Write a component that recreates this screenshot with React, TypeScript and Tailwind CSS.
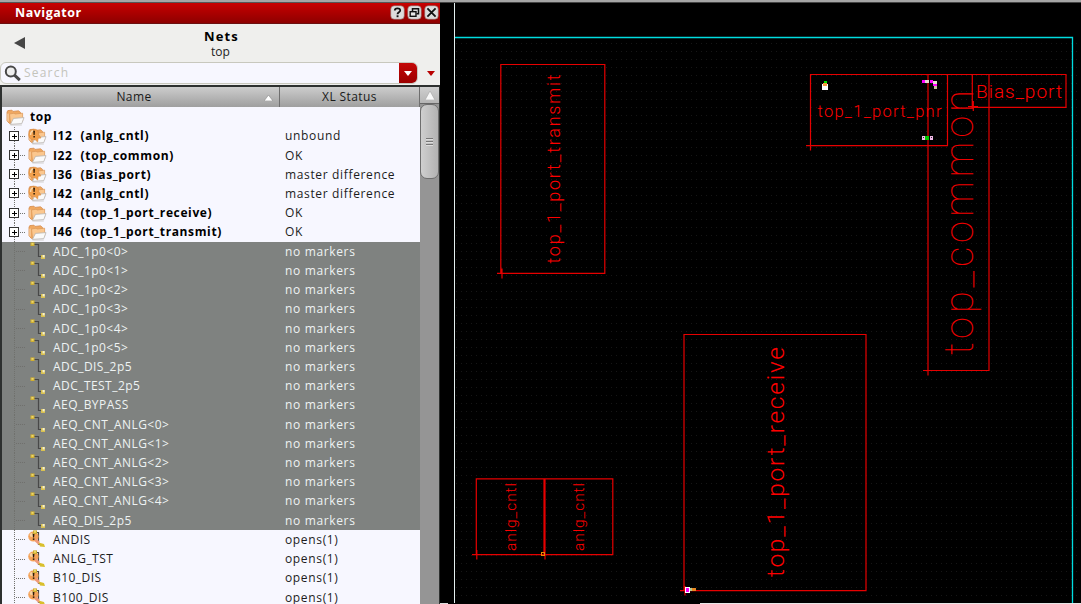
import React from "react";

type Kind = "folder" | "warnFolder" | "net" | "warnNet";
type Row = { kind: Kind; name: string; inst?: string; status: string };

const instances: Row[] = [
  { kind: "warnFolder", name: "I12", inst: "(anlg_cntl)", status: "unbound" },
  { kind: "folder", name: "I22", inst: "(top_common)", status: "OK" },
  { kind: "warnFolder", name: "I36", inst: "(Bias_port)", status: "master difference" },
  { kind: "warnFolder", name: "I42", inst: "(anlg_cntl)", status: "master difference" },
  { kind: "folder", name: "I44", inst: "(top_1_port_receive)", status: "OK" },
  { kind: "folder", name: "I46", inst: "(top_1_port_transmit)", status: "OK" },
];

const selectedNets = [
  "ADC_1p0<0>", "ADC_1p0<1>", "ADC_1p0<2>", "ADC_1p0<3>", "ADC_1p0<4>", "ADC_1p0<5>",
  "ADC_DIS_2p5", "ADC_TEST_2p5", "AEQ_BYPASS", "AEQ_CNT_ANLG<0>", "AEQ_CNT_ANLG<1>",
  "AEQ_CNT_ANLG<2>", "AEQ_CNT_ANLG<3>", "AEQ_CNT_ANLG<4>", "AEQ_DIS_2p5",
];

const openNets = ["ANDIS", "ANLG_TST", "B10_DIS", "B100_DIS"];

function Warning() {
  return (
    <g>
      <path d="M5 1.5 C8.5 .5 11 3 10.6 6.5 L13 10 L10.2 10.2 L9.6 14 L7 11.6 C3 12.5 .8 10 .8 6.6 C.8 4 2.4 2 5 1.5Z" fill="#f2a04c" stroke="#d98a3f" strokeWidth=".6" />
      <path d="M5 2.6 C3.2 3.4 2.4 5 2.6 7" stroke="#fbd9ad" strokeWidth="1.4" fill="none" />
      <path d="M5.2 2.8h1.8l-.4 4.2h-1z" fill="#2a1a08" />
      <rect x="5.4" y="8" width="1.5" height="1.5" fill="#2a1a08" />
    </g>
  );
}

function Folder({ warn }: { warn?: boolean }) {
  return (
    <svg width="19" height="17" viewBox="0 0 19 17" className="shrink-0">
      <path d="M1 3.2 L1.8 1.6 L6 1.2 L7 2.4 L12.5 1.8 L14.5 3.4 L14.5 11 L3.5 14.5 L1 12Z" fill="#f0a860" stroke="#d58c4c" strokeWidth=".8" />
      <path d="M3.5 5 L8 4.2 L9 5 L16.6 4.2 L16.6 12 L4.6 14.8Z" fill="#fbc78e" stroke="#dd9a5c" strokeWidth=".8" />
      <path d="M2 4.6v8" stroke="#fde0bd" strokeWidth="1" />
      <path d="M7.5 9.4 L18 8.6 L15.8 14.6 L4.4 15.4Z" fill="#fafafa" stroke="#b9b4ae" strokeWidth=".8" />
      <path d="M4.4 16h11.4" stroke="#c9c5c2" strokeWidth=".8" />
      {warn && <Warning />}
    </svg>
  );
}

function Net({ warn }: { warn?: boolean }) {
  return (
    <svg width="19" height="19" viewBox="0 0 19 19" className="shrink-0">
      <path d={warn ? "M8 2.5 H10.5 V14.5 H14" : "M5 2.5 H10.5 V14.5 H14"} stroke="#484848" strokeWidth="1.2" fill="none" />
      {warn && (
        <g>
          <ellipse cx="5.4" cy="6.6" rx="5.2" ry="5" fill="#f4a258" />
          <ellipse cx="3.8" cy="5" rx="2.2" ry="2" fill="#fbd3a0" />
          <path d="M7.5 8l4 3.5-.6 3.5-4-3.5z" fill="#ef9a78" />
          <path d="M4.6 3.6h1.9l-.4 3.8h-1.1z" fill="#2a1a08" />
          <rect x="4.8" y="8.4" width="1.6" height="1.5" fill="#2a1a08" />
        </g>
      )}
      <rect x={warn ? 5 : 2.5} y="0.4" width="4" height="3.6" fill="#cfae30" />
      <rect x={warn ? 6 : 3.5} y="1.2" width="2" height="1.4" fill="#f3e27c" />
      {warn ? (
        <path d="M10.5 12.5 L16 14 L17 17 L12 16.4Z" fill="#d9bf2c" />
      ) : (
        <g>
          <rect x="13" y="13" width="4" height="4" fill="#d8c050" />
          <rect x="14.6" y="13" width="2" height="2.4" fill="#f3efd2" />
        </g>
      )}
    </svg>
  );
}

function Branch({ plus }: { plus?: boolean }) {
  return (
    <svg width="26" height="19.22" viewBox="0 0 26 19.22" className="shrink-0">
      <path d="M12.5 0V19.22" stroke="#70706c" strokeDasharray="1 1" />
      <path d="M14 9.5H23" stroke="#70706c" strokeDasharray="1 1" />
      {plus && (
        <g shapeRendering="crispEdges">
          <rect x="7.5" y="4.5" width="9" height="9" fill="#fff" stroke="#333" />
          <path d="M9.5 9.5H15M12.5 7V12" stroke="#000" strokeWidth="1" />
        </g>
      )}
    </svg>
  );
}

function TreeRow({ row, selected }: { row: Row; selected?: boolean }) {
  const isNet = row.kind === "net" || row.kind === "warnNet";
  const warn = row.kind === "warnNet" || row.kind === "warnFolder";
  return (
    <div className={selected ? "flex h-[19.22px] items-center text-[#eef3f3]" : "flex h-[19.22px] items-center text-[#1c1c1c]"}>
      <Branch plus={!isNet} />
      <div className="flex w-[25px] shrink-0 items-center">{isNet ? <Net warn={warn} /> : <Folder warn={warn} />}</div>
      {row.inst ? (
        <div className="flex w-[232px] gap-[8px] whitespace-nowrap text-[12px] font-bold tracking-[0.63px] text-black">
          <span>{row.name}</span>
          <span>{row.inst}</span>
        </div>
      ) : (
        <div className="w-[232px] whitespace-nowrap text-[12px] tracking-[0.45px]">{row.name}</div>
      )}
      <div className="whitespace-nowrap text-[12px] tracking-[0.65px]">{row.status}</div>
    </div>
  );
}

function WinButton({ children }: { children: React.ReactNode }) {
  return (
    <svg width="15" height="15" viewBox="0 0 15 15">
      <rect x=".7" y=".7" width="13.6" height="13.6" rx="3.6" fill="#dcdcdc" stroke="#8b5a55" strokeWidth=".6" />
      {children}
    </svg>
  );
}

function Navigator() {
  return (
    <aside className="flex h-full w-[440px] shrink-0 flex-col bg-[#efefed]">
      <div className="h-[2px] bg-[#a5a5a5]" />
      <div className="flex h-[22px] items-center border-b border-[#6b1010] border-t-[#555] border-t bg-linear-to-b from-[#c80000] to-[#8e0000] pl-[15px] pr-px">
        <h1 className="grow pt-px text-[12.5px] font-bold tracking-[0.5px] text-white">Navigator</h1>
        <div className="flex gap-[2px]">
          <WinButton>
            <path d="M4.8 5.5 C4.8 2.6 10.2 2.6 10.2 5.4 C10.2 7.2 7.5 7.2 7.5 9.2" stroke="#111" strokeWidth="1.8" fill="none" />
            <rect x="6.6" y="10.3" width="1.9" height="1.9" fill="#111" />
          </WinButton>
          <WinButton>
            <path d="M5.5 3.8H11.5V8.8H9.5M5.5 3V6" stroke="#111" strokeWidth="1.5" fill="none" />
            <rect x="3.2" y="6.7" width="5.8" height="4.6" fill="#e8e8e8" stroke="#111" strokeWidth="1.4" />
          </WinButton>
          <WinButton>
            <path d="M3.4 3.4L11.6 11.6M11.6 3.4L3.4 11.6" stroke="#111" strokeWidth="1.8" />
          </WinButton>
        </div>
      </div>
      <div className="grid h-[38px] grid-cols-[40px_1fr_38px] items-center">
        <svg width="11" height="12" viewBox="0 0 11 12" className="ml-[14px]">
          <path d="M0 6L11 0V12Z" fill="#464646" />
        </svg>
        <div className="flex flex-col items-center text-black">
          <span className="pl-[1px] text-[13px] font-bold leading-[17px] tracking-[1.1px]">Nets</span>
          <span className="pr-px text-[12px] leading-[13px] text-[#222]">top</span>
        </div>
      </div>
      <div className="flex h-[23px] items-center">
        <div className="flex h-[22px] w-[418px] items-center overflow-hidden rounded-[6px] border border-[#c8c8be] bg-[#f7f7ff]">
          <svg width="20" height="19" viewBox="0 0 20 19" className="ml-[2px] shrink-0">
            <circle cx="7.8" cy="7.4" r="5" fill="#eee" stroke="#484848" strokeWidth="2" />
            <path d="M11.5 11.2L16.8 16.2" stroke="#484848" strokeWidth="3" />
          </svg>
          <span className="grow pl-[1px] text-[12px] tracking-[1.2px] text-[#c4c4bc]">Search</span>
          <div className="flex h-[21px] w-[18px] items-center justify-center bg-linear-to-b from-[#c40808] to-[#9a0000]">
            <svg width="8" height="5" viewBox="0 0 8 5"><path d="M0 0H8L4 5Z" fill="#fff" /></svg>
          </div>
        </div>
        <svg width="8" height="5" viewBox="0 0 8 5" className="ml-[9px]"><path d="M0 0H8L4 5Z" fill="#b80000" /></svg>
      </div>
      <div className="flex min-h-0 grow flex-col pt-px">
        <div className="flex min-h-0 grow border-l-2 border-r border-t-2 border-[#2d302f]">
          <div className="flex w-[418px] shrink-0 flex-col overflow-hidden bg-[#f7f7ff]">
            <div className="flex h-[20px] shrink-0 bg-linear-to-b from-[#cdcdcd] to-[#9f9f9f] text-[12px] tracking-[0.4px] text-[#1a1a1a]">
              <div className="flex w-[278px] items-center border-r border-[#6f6f6f]">
                <span className="grow pl-[2px] text-center">Name</span>
                <svg width="9" height="6" viewBox="0 0 9 6" className="mr-[6px] mt-[2px]"><path d="M0 6L4.5 0L9 6Z" fill="#fff" stroke="#888" strokeWidth=".6" /></svg>
              </div>
              <div className="grow border-r border-[#6f6f6f] pt-px text-center">XL Status</div>
            </div>
            <div className="flex h-[19.22px] shrink-0 items-center pl-[4px]">
              <Folder />
              <span className="pl-[5px] text-[12px] font-bold tracking-[0.6px] text-black">top</span>
            </div>
            <div className="flex shrink-0 flex-col">
              {instances.map((r) => <TreeRow key={r.name} row={r} />)}
            </div>
            <div className="flex shrink-0 flex-col bg-[#7f8280]">
              {selectedNets.map((n) => <TreeRow key={n} selected row={{ kind: "net", name: n, status: "no markers" }} />)}
            </div>
            <div className="flex shrink-0 flex-col">
              {openNets.map((n) => <TreeRow key={n} row={{ kind: "warnNet", name: n, status: "opens(1)" }} />)}
            </div>
          </div>
          <div className="flex grow flex-col bg-[#959595]">
            <div className="flex h-[17px] items-center justify-center border-b border-[#666] bg-linear-to-b from-[#cfcfcf] to-[#b5b5b5]">
              <svg width="10" height="9" viewBox="0 0 10 9"><path d="M0 9L5 0L10 9Z" fill="#f8f8f8" stroke="#a5a5a5" strokeWidth=".6" /></svg>
            </div>
            <div className="flex h-[75px] flex-col items-center justify-center gap-px rounded-[7px] border border-[#6e6e6e] bg-linear-to-r from-[#cfcfcf] to-[#b2b2b2]">
              <div className="h-[2px] w-[7px] border-b border-[#ddd] bg-[#777]" />
              <div className="h-[2px] w-[7px] border-b border-[#ddd] bg-[#777]" />
              <div className="h-[2px] w-[7px] border-b border-[#ddd] bg-[#777]" />
            </div>
          </div>
        </div>
      </div>
    </aside>
  );
}

type LabelProps = { x: number; y: number; size: number; len: number; text: string; vertical?: boolean; thin?: boolean };

function Label({ x, y, size, len, text, vertical, thin }: LabelProps) {
  return (
    <text
      transform={vertical ? `translate(${x} ${y}) rotate(-90)` : `translate(${x} ${y})`}
      fontSize={size}
      textLength={len}
      lengthAdjust="spacing"
      className={thin ? "fill-[#f00000] font-thin" : "fill-[#ff0000] font-light"}
    >
      {text}
    </text>
  );
}

function Layout() {
  return (
    <svg width="641" height="604" viewBox="440 0 641 604" className="shrink-0 bg-black font-['Roboto',sans-serif]">
      <defs>
        <pattern id="grid" width="5" height="8" patternUnits="userSpaceOnUse">
          <rect x="1" y="3" width="1" height="1" fill="#161616" />
        </pattern>
      </defs>
      <rect x="456" y="38" width="625" height="565" fill="url(#grid)" />
      <rect x="440" y="0" width="641" height="2" fill="#a5a5a5" />
      <rect x="440" y="2" width="641" height="1" fill="#444" />
      <path d="M454.5 3V603" stroke="#e4efef" />
      <path d="M455 37.5H1072.5V604" stroke="#00dce0" fill="none" strokeWidth="1.3" />
      <g fill="none" stroke="#e60000" strokeWidth="1.2">
        <path d="M500.8 64.5H604.8V273.3H500.8ZM497 273.3H501M502 268.5V278.5" />
        <path d="M810.5 74.5H947.5V145.6H810.5ZM806 145.6H811M810.5 145V150.5" />
        <path d="M972.3 74.5H1066V107.4H972.3ZM968 106.5H978M973.3 101V111" />
        <path d="M928 74.5H989V370.5H928ZM923 370.5H928M928 370V375.5" />
        <path d="M684 334.5H866V590.6H684ZM680 590.6H684M685 586V595.5" />
        <path d="M476.3 478.8H612.8V554.6H476.3ZM472 554.6H476M476.8 550V559.5M545 554V559.5" />
        <path d="M544.5 479V555" strokeWidth="2.2" />
      </g>
      <Label vertical x={559.5} y={263.5} size={18} len={189} text="top_1_port_transmit" />
      <Label vertical thin x={973} y={355} size={40} len={265} text="top_common" />
      <Label vertical x={784} y={577} size={24.5} len={230} text="top_1_port_receive" />
      <Label vertical x={516} y={551} size={15.5} len={68} text="anlg_cntl" />
      <Label vertical x={584} y={551} size={15.5} len={68} text="anlg_cntl" />
      <Label x={817.5} y={116.5} size={16.5} len={124} text="top_1_port_pnr" />
      <Label x={976} y={97.5} size={19} len={86} text="Bias_port" />
      <g shapeRendering="crispEdges">
        <rect x="824" y="81" width="3" height="3" fill="#00e000" />
        <rect x="822" y="84" width="6" height="6" fill="#fff" />
        <rect x="823" y="83" width="4" height="3" fill="#f59a40" />
        <rect x="922" y="80" width="3" height="3" fill="#ff00ff" />
        <rect x="925" y="80" width="4" height="3" fill="#e8d8d0" />
        <rect x="930" y="80" width="3" height="3" fill="#ff00ff" />
        <rect x="933" y="81" width="4" height="3" fill="#e8e0d0" />
        <rect x="933" y="84" width="4" height="2" fill="#ff00ff" />
        <rect x="934" y="86" width="3" height="3" fill="#c8c0a0" />
        <rect x="922" y="136" width="3" height="4" fill="#f0b8e8" />
        <rect x="925" y="136" width="4" height="4" fill="#00c800" />
        <rect x="930" y="136" width="3" height="4" fill="#f0b8e8" />
        <rect x="923" y="137" width="1" height="1" fill="#333" />
        <rect x="931" y="137" width="1" height="1" fill="#333" />
        <rect x="685" y="587" width="5" height="6" fill="#fff" />
        <rect x="686" y="588" width="3" height="4" fill="#ff00ff" />
        <rect x="690" y="588" width="3" height="3" fill="#b8c890" />
        <rect x="692" y="588" width="4" height="3" fill="#e88820" />
        <rect x="541.5" y="552.5" width="3" height="3" fill="none" stroke="#e88800" />
        <rect x="440" y="603" width="8" height="1" fill="#ddd" />
        <rect x="700" y="603" width="381" height="1" fill="#e8e8e8" />
      </g>
    </svg>
  );
}

export default function App() {
  return (
    <main className="flex h-[604px] w-[1081px] overflow-hidden bg-black font-['Open_Sans','Noto_Sans',sans-serif]">
      <Navigator />
      <Layout />
    </main>
  );
}
